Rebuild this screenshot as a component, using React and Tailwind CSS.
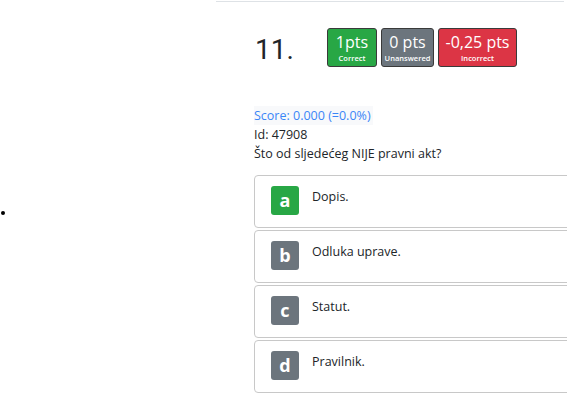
const options = [
  { letter: "a", text: "Dopis.", correct: true },
  { letter: "b", text: "Odluka uprave." },
  { letter: "c", text: "Statut." },
  { letter: "d", text: "Pravilnik." },
];

const Badge = ({ top, bottom, color, width }) => (
  <div
    className={`flex flex-col items-center justify-center rounded-[3px] border border-[#3a3a3a] text-white h-[39px] ${color} ${width}`}
  >
    <span className="text-[16px] leading-[21px]">{top}</span>
    <span className="text-[7.5px] leading-[10px] font-semibold">{bottom}</span>
  </div>
);

const App = () => {
  return (
    <div className="w-[567px] h-[405px] overflow-hidden bg-white flex font-['Open_Sans',sans-serif] text-[#212529]">
      <div className="w-[216px] shrink-0 pt-[211px] pl-[1px]">
        <span className="block w-[4px] h-[4px] rounded-full bg-black"></span>
      </div>
      <div className="flex-1 flex flex-col">
        <div className="h-[2px] w-[348px] border-t border-[#dee2e6] mt-[1px]"></div>
        <div className="flex items-center pl-[39px] pt-[25px] gap-[37px]">
          <span className="text-[28px] leading-none font-['Roboto',sans-serif] w-[35px] pt-[5px]">11.</span>
          <div className="flex gap-[4px]">
            <Badge top="1pts" bottom="Correct" color="bg-[#28a745]" width="w-[50px]" />
            <Badge top="0 pts" bottom="Unanswered" color="bg-[#6c757d]" width="w-[53px]" />
            <Badge top="-0,25 pts" bottom="Incorrect" color="bg-[#dc3545]" width="w-[79px]" />
          </div>
        </div>
        <div className="pl-[38px] mt-[39px] text-[12.5px] leading-[19px]">
          <div className="text-[#3b86f7] bg-[#f8f9fb] w-fit pr-[2px]">Score: 0.000 (=0.0%)</div>
          <div>Id: 47908</div>
          <div>Što od sljedećeg NIJE pravni akt?</div>
        </div>
        <div className="flex flex-col gap-[2px] ml-[38px] mt-[12px] -mr-[10px]">
          {options.map((o) => (
            <div
              key={o.letter}
              className="h-[53px] border border-[#c8c8c8] rounded-[4px] flex items-start pl-[16px] pt-[10px] gap-[13px]"
            >
              <div
                className={`w-[28px] h-[29px] rounded-[3px] flex items-center justify-center text-white font-bold text-[18px] ${
                  o.correct ? "bg-[#28a745]" : "bg-[#6c757d]"
                }`}
              >
                {o.letter}
              </div>
              <span className="text-[12.5px] leading-[18px] pt-[2px]">{o.text}</span>
            </div>
          ))}
        </div>
      </div>
    </div>
  );
};

export default App;
